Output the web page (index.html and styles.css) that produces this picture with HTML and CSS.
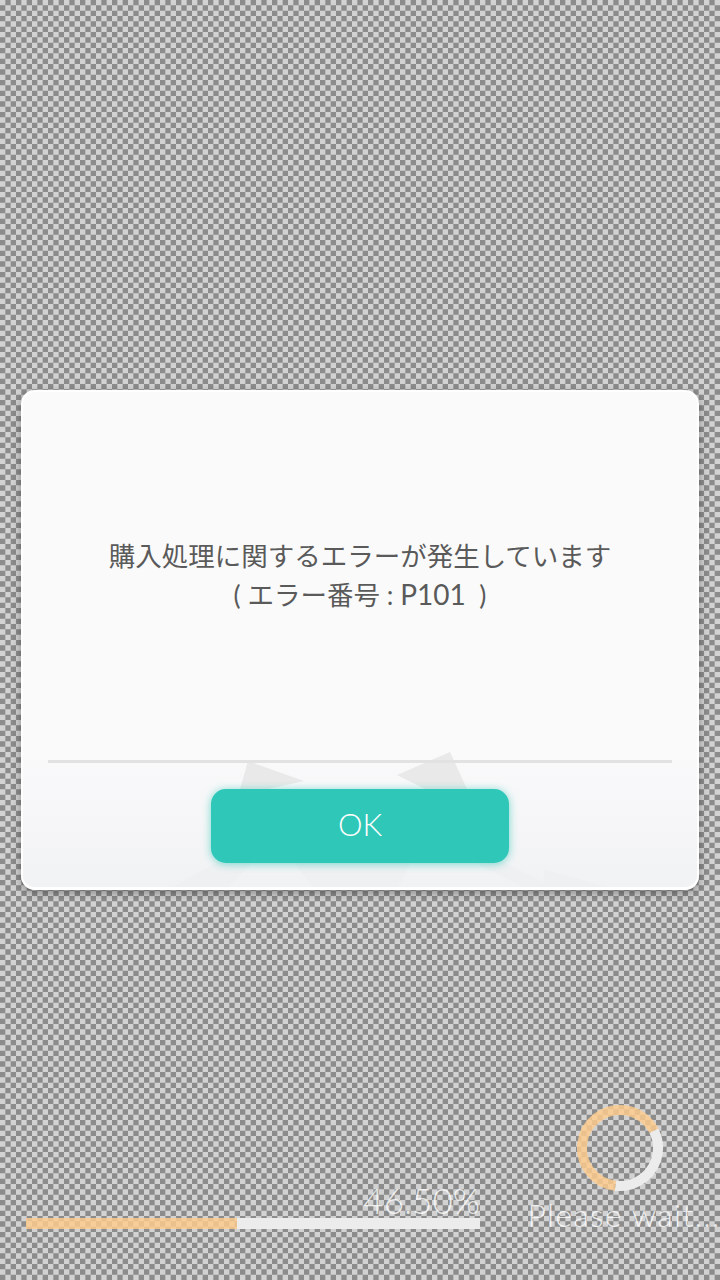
FILE: index.html
```html
<!DOCTYPE html>
<html lang="ja">
<head>
  <meta charset="UTF-8" />
  <meta name="viewport" content="width=device-width, initial-scale=1.0"/>
  <title>Error</title>
  <link rel="stylesheet" href="styles.css">
</head>
<body>

  <div class="screen">
    <div class="dialog">
      <svg class="dialog-art" width="674" height="495" viewBox="0 0 674 495">
        <polygon class="shard" points="225,369 281,389 245,397 217,397"/>
        <polygon class="shard" points="427,360 374,383 402,397 444,397"/>
        <polygon class="shard-faint" points="195,470 150,495 205,495 230,470"/>
        <polygon class="shard-faint" points="270,470 290,495 375,495 388,470"/>
        <polygon class="shard-faint" points="450,470 500,495 530,495 480,470"/>
        <polygon class="shard-faint" points="522,478 520,495 585,495"/>
      </svg>
      <div class="message">
        <p>購入処理に関するエラーが発生しています</p>
        <p>( エラー番号 : <span class="code">P101</span>&nbsp; )</p>
      </div>
      <div class="rule"></div>
      <div class="actions">
        <button class="ok">OK</button>
      </div>
    </div>

    <div class="loader">
      <div class="progress">
        <div class="percent">46.50%</div>
        <div class="bar">
          <div class="bar-fill" style="width: 46.5%"></div>
          <div class="bar-rest"></div>
        </div>
      </div>
      <div class="wait">
        <svg class="ring" width="88" height="88" viewBox="0 0 88 88">
          <circle class="ring-track" cx="44" cy="44" r="38" pathLength="360" stroke-dasharray="124 236" transform="rotate(-27 44 44)"/>
          <circle class="ring-value" cx="44" cy="44" r="38" pathLength="360" stroke-dasharray="236 124" transform="rotate(97 44 44)"/>
        </svg>
        <div class="wait-text">Please wait...</div>
      </div>
    </div>
  </div>

</body>
</html>
```

FILE: styles.css
```css
* {
  box-sizing: border-box;
  margin: 0;
  padding: 0;
}

body {
  font-family: Lato, "Noto Sans CJK JP", sans-serif;
  background: #d2d2d2 url("data:image/svg+xml,%3Csvg xmlns='http://www.w3.org/2000/svg' width='32' height='32' viewBox='0 0 6 6'%3E%3Cpath fill='%238c8c8c' d='M1 0h1v1H1zM3 0h1v1H3zM5 0h1v1H5zM0 1h1v1H0zM2 1h1v1H2zM4 1h1v1H4zM1 2h1v1H1zM3 2h1v1H3zM5 2h1v1H5zM0 3h1v1H0zM2 3h1v1H2zM4 3h1v1H4zM1 4h1v1H1zM3 4h1v1H3zM5 4h1v1H5zM0 5h1v1H0zM2 5h1v1H2zM4 5h1v1H4z'/%3E%3C/svg%3E") 0 0 / 32px 32px;
}

.screen {
  height: 1280px;
  display: flex;
  flex-direction: column;
  padding-top: 390px;
}

.dialog {
  position: relative;
  width: 678px;
  height: 500px;
  margin-left: 21px;
  display: flex;
  flex-direction: column;
  border: 2px solid #fff;
  border-bottom-width: 3px;
  border-radius: 14px;
  background: linear-gradient(#fafafb 0, #fafafb 72%, #f1f2f4 100%);
  box-shadow: 0 3px 10px rgba(0, 0, 0, 0.35);
}

.dialog-art {
  position: absolute;
  left: 0;
  top: 0;
}

.shard {
  fill: #e9e9e9;
}

.shard-faint {
  fill: #eff0f2;
}

.message {
  position: relative;
  flex: 1;
  display: flex;
  flex-direction: column;
  justify-content: center;
  align-items: center;
  padding-bottom: 2px;
  font-family: Lato, "Noto Sans CJK JP", sans-serif;
  font-size: 26.5px;
  line-height: 38px;
  color: #5a5a5a;
}

.code {
  font-size: 28px;
}

.rule {
  position: relative;
  height: 3px;
  margin: 0 25px;
  background: #e2e2e2;
}

.actions {
  position: relative;
  height: 124px;
  padding-top: 1px;
  display: flex;
  justify-content: center;
  align-items: center;
}

.ok {
  width: 298px;
  height: 74px;
  padding-bottom: 3px;
  border: none;
  border-radius: 15px;
  background: #2fc7b8;
  box-shadow: 0 1px 8px rgba(47, 199, 184, 0.65);
  color: #fff;
  font-family: Lato, sans-serif;
  font-size: 31px;
  font-weight: 300;
}

.loader {
  margin-top: auto;
  padding: 0 0 47px 26px;
  display: flex;
  align-items: flex-end;
}

.progress {
  flex: none;
  width: 454px;
  margin-bottom: 4px;
}

.percent {
  font-size: 35px;
  font-weight: 300;
  line-height: 36px;
  text-align: right;
  color: rgba(255, 255, 255, 0.8);
}

.bar {
  height: 11px;
  display: flex;
}

.bar-fill {
  background: rgba(255, 205, 140, 0.82);
}

.bar-rest {
  flex: 1;
  background: #ececec;
}

.wait {
  flex: none;
  width: 240px;
  margin-left: 20px;
  display: flex;
  flex-direction: column;
  align-items: center;
}

.ring-track,
.ring-value {
  fill: none;
  stroke-width: 10;
}

.ring-track {
  stroke: #ececec;
}

.ring-value {
  stroke: rgba(255, 205, 140, 0.82);
}

.wait-text {
  margin-top: 5px;
  padding-left: 8px;
  font-size: 32px;
  font-weight: 300;
  letter-spacing: 1.2px;
  line-height: 36px;
  white-space: nowrap;
  color: rgba(255, 255, 255, 0.8);
}
```
